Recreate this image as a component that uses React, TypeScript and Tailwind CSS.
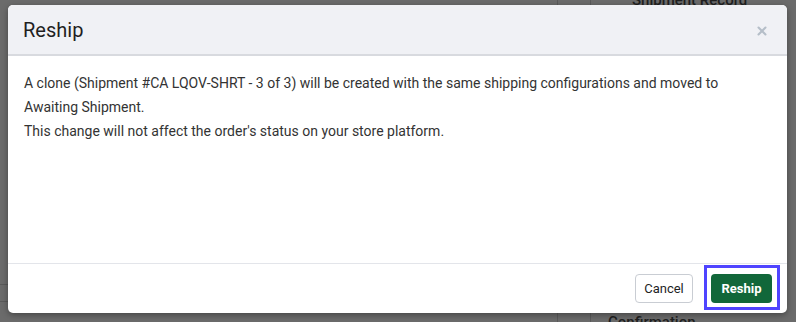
import { X } from 'lucide-react'

function Backdrop() {
  return (
    <div className="absolute inset-0 flex bg-[#6b6b6b]">
      {/* 左侧区域 */}
      <div className="flex w-[558px] flex-col border-r border-[#5a5a5a]">
        <div className="h-[284px]" />
        <div className="h-[18px] border-y border-[#5a5a5a]" />
      </div>
      <div className="w-[33px] border-r border-[#5a5a5a]" />
      {/* 右侧面板 */}
      <div className="flex flex-1 flex-col justify-between pl-[17px]">
        <div className="-mt-[9px] pl-[24px] text-[15px] font-medium leading-[18px] text-[#1f1f1f]">
          Shipment Record
        </div>
        <div className="-mb-[9px] text-[15px] font-medium leading-[18px] text-[#1f1f1f]">
          Confirmation
        </div>
      </div>
    </div>
  )
}

export default function App() {
  return (
    <div
      className="relative h-[322px] w-[796px] overflow-hidden"
      style={{ fontFamily: 'Roboto, "Liberation Sans", sans-serif' }}
    >
      <Backdrop />

      {/* 弹窗 */}
      <div className="absolute left-[8px] top-[5px] flex h-[308px] w-[779px] flex-col overflow-hidden rounded-[5px] bg-white shadow-[0_2px_6px_rgba(0,0,0,0.35)]">
        <div className="flex h-[51px] items-center justify-between border-b-2 border-[#d8dadf] bg-[#f0f1f5] pl-[15px] pr-[18px]">
          <h2 className="text-[20px] leading-none text-[#1f1f1f]">Reship</h2>
          <X className="mt-[2px] h-[14px] w-[14px] text-[#b5bec8]" strokeWidth={3.5} />
        </div>

        <div className="flex-1 px-4 pt-[15px] text-[14px] leading-[24px] text-[#333]">
          <p>
            A clone (Shipment #CA LQOV-SHRT - 3 of 3) will be created with the same shipping
            configurations and moved to Awaiting Shipment.
          </p>
          <p>This change will not affect the order's status on your store platform.</p>
        </div>

        <div className="flex h-[50px] items-start justify-end gap-[11px] border-t border-[#e3e5ea] pr-[7px] pt-[1px]">
          <button className="mt-[9px] h-[29px] w-[58px] rounded-[4px] border border-[#c9cdd3] bg-white text-[13px] text-[#1f1f1f]">
            Cancel
          </button>
          {/* 焦点框 */}
          <div className="border-[3px] border-[#4f44ff] pb-[4px] pl-[4px] pr-[5px] pt-[6px]">
            <button className="block h-[29px] w-[61px] rounded-[4px] bg-[#11673a] text-[13px] font-bold text-white">
              Reship
            </button>
          </div>
        </div>
      </div>
    </div>
  )
}
